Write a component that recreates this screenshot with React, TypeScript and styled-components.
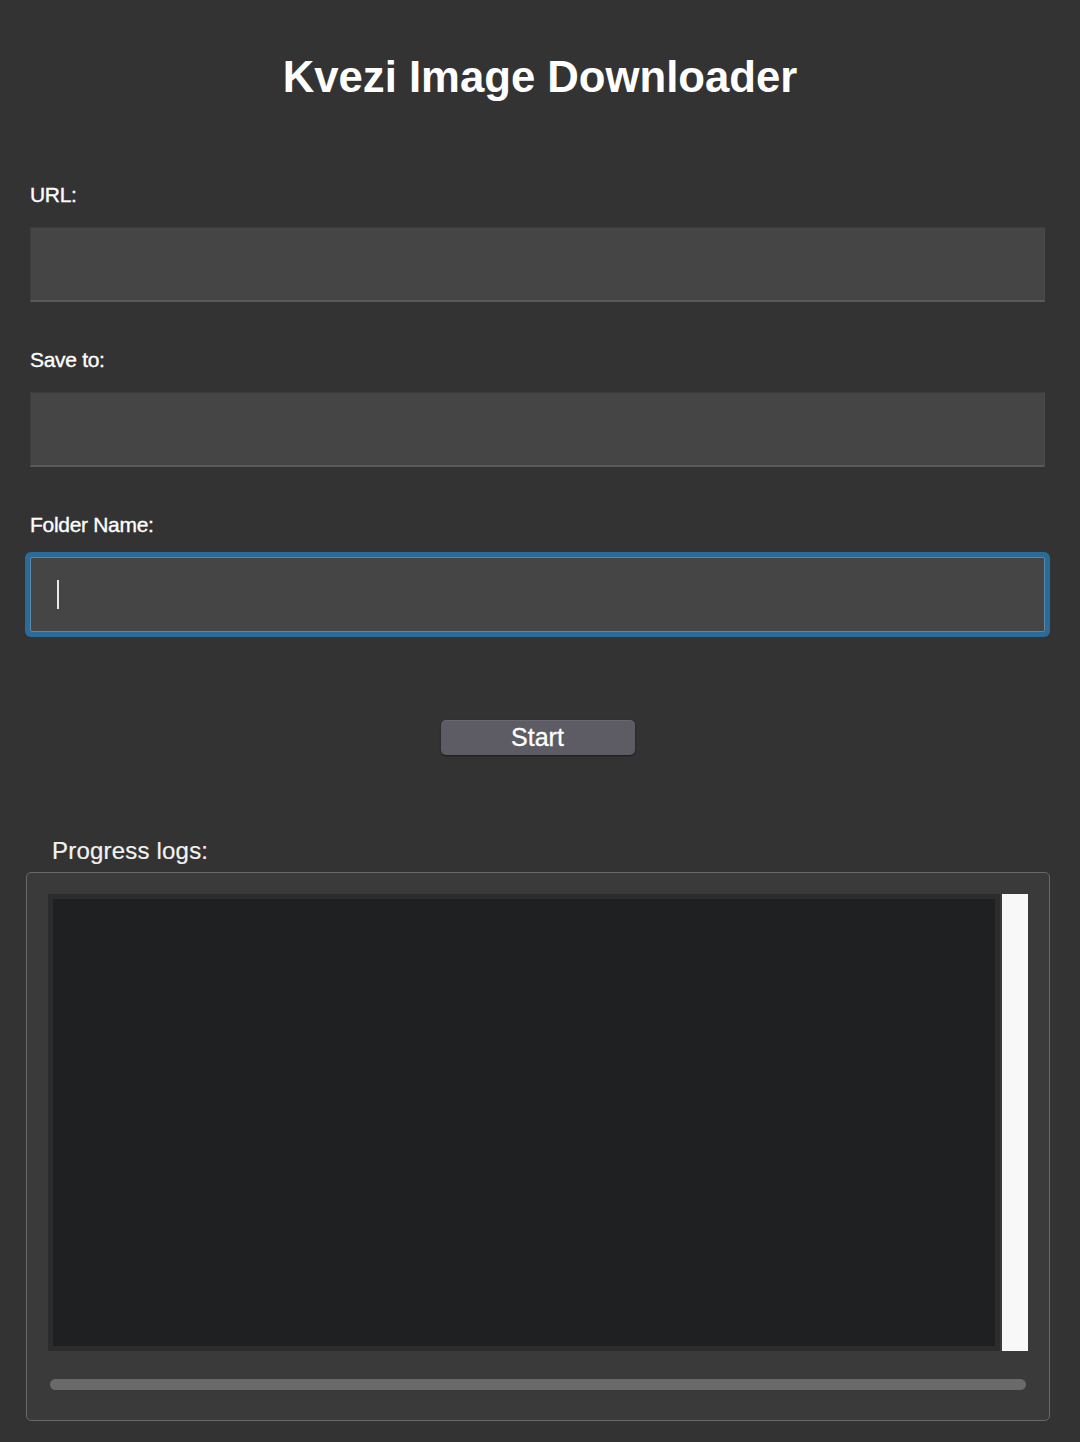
import React from "react";
import styled, { createGlobalStyle } from "styled-components";

const GlobalStyle = createGlobalStyle`
  html, body {
    margin: 0;
    padding: 0;
    background-color: #333333;
  }
  * {
    box-sizing: border-box;
  }
`;

const Page = styled.div`
  width: 1080px;
  min-height: 1442px;
  background-color: #333333;
  color: #f7f7f7;
  font-family: "Liberation Sans", Arial, sans-serif;
  overflow: hidden;
`;

const Title = styled.h1`
  margin: 0;
  padding-top: 48px;
  line-height: 58px;
  font-size: 43.7px;
  font-weight: 700;
  text-align: center;
  color: #ffffff;
`;

const Form = styled.div`
  margin-top: 76px;
  padding: 0 35px 0 30px;
  display: flex;
  flex-direction: column;
`;

const Field = styled.div<{ $first?: boolean }>`
  margin-top: ${(p) => (p.$first ? "0" : "45px")};
  display: flex;
  flex-direction: column;
  gap: 19px;
`;

const Label = styled.label`
  font-size: 21px;
  line-height: 26px;
  letter-spacing: -0.3px;
  color: #ffffff;
  -webkit-text-stroke: 0.35px #ffffff;
`;

const Input = styled.div<{ $focused?: boolean }>`
  height: 75px;
  background-color: #454545;
  border-top: 1px solid #3c3c3c;
  border-left: 1px solid #3e3e3e;
  border-right: 1px solid #4a4a4a;
  border-bottom: 2px solid #5a5a5a;
  display: flex;
  align-items: center;
  padding-left: 26px;
  ${(p) =>
    p.$focused &&
    `
    border: 1px solid #5b87a8;
    border-radius: 2px;
    box-shadow: 0 0 0 5px #2a6b98;
  `}
`;

const Caret = styled.span`
  width: 2px;
  height: 29px;
  background-color: #e8e8e8;
`;

const ButtonRow = styled.div`
  margin-top: 88px;
  display: flex;
  justify-content: center;
`;

const StartButton = styled.button`
  width: 194px;
  height: 35px;
  padding: 0;
  border: none;
  border-radius: 5px;
  background-color: #5d5b63;
  box-shadow: 0 1px 2px rgba(0, 0, 0, 0.5), inset 0 1px 0 rgba(255, 255, 255, 0.08);
  color: #ffffff;
  font-family: "Liberation Sans", Arial, sans-serif;
  font-size: 25px;
  line-height: 35px;
  -webkit-text-stroke: 0.3px #ffffff;
`;

const LogSection = styled.section`
  margin-top: 81px;
  padding: 0 30px 0 26px;
`;

const LogTitle = styled.div`
  padding-left: 26px;
  font-size: 24px;
  line-height: 30px;
  letter-spacing: 0.2px;
  color: #f2f2f2;
  -webkit-text-stroke: 0.2px #f2f2f2;
`;

const Frame = styled.div`
  margin-top: 6px;
  height: 549px;
  border: 1px solid #686868;
  border-radius: 5px;
  background-color: #3a3a3a;
  padding: 21px 21px 0 21px;
  display: flex;
  flex-direction: column;
`;

const LogRow = styled.div`
  display: flex;
  gap: 2px;
  height: 457px;
`;

const LogArea = styled.div`
  flex: 1;
  background-color: #1f2021;
  border: 5px solid #2c2c2c;
`;

const VScroll = styled.div`
  width: 26px;
  background-color: #f8f8f8;
`;

const HScroll = styled.div`
  margin: 28px 2px 0 2px;
  height: 11px;
  border-radius: 6px;
  background-color: #6a6a6a;
`;

const fields = ["URL:", "Save to:"];

export default function App() {
  return (
    <Page>
      <GlobalStyle />
      <Title>Kvezi Image Downloader</Title>
      <Form>
        {fields.map((f, i) => (
          <Field key={f} $first={i === 0}>
            <Label>{f}</Label>
            <Input />
          </Field>
        ))}
        <Field>
          <Label>Folder Name:</Label>
          <Input $focused>
            <Caret />
          </Input>
        </Field>
        <ButtonRow>
          <StartButton>Start</StartButton>
        </ButtonRow>
      </Form>
      <LogSection>
        <LogTitle>Progress logs:</LogTitle>
        <Frame>
          <LogRow>
            <LogArea />
            <VScroll />
          </LogRow>
          <HScroll />
        </Frame>
      </LogSection>
    </Page>
  );
}
